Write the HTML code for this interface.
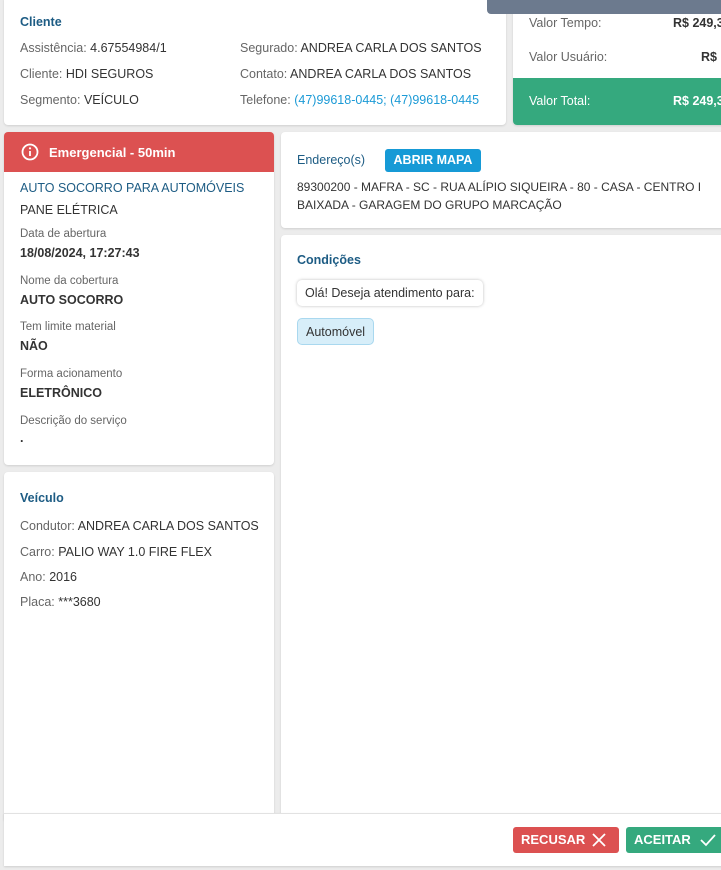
<!DOCTYPE html>
<html><head><meta charset="utf-8"><style>
*{box-sizing:border-box;margin:0;padding:0}
body{width:721px;height:870px;background:#ececec;font-family:"Liberation Sans",sans-serif;color:#333;position:relative;overflow:hidden;font-size:12.5px}
.c{position:absolute;background:#fff;border-radius:4px;box-shadow:0 1px 2px rgba(0,0,0,.12)}
.t{position:absolute;white-space:nowrap}
.h{color:#1d5c84;font-weight:bold;font-size:12.5px}
.g{color:#666}
.l{color:#666;font-size:11.5px}
.b{font-weight:bold;color:#333}
</style></head><body>
<div class="c" style="left:4px;top:-4px;width:502px;height:129px">
<div class="t h" style="left:16px;top:19px">Cliente</div>
<div class="t" style="left:16px;top:45px"><span class="g">Assistência:</span> 4.67554984/1</div>
<div class="t" style="left:16px;top:71px"><span class="g">Cliente:</span> HDI SEGUROS</div>
<div class="t" style="left:16px;top:97px"><span class="g">Segmento:</span> VEÍCULO</div>
<div class="t" style="left:236px;top:45px"><span class="g">Segurado:</span> ANDREA CARLA DOS SANTOS</div>
<div class="t" style="left:236px;top:71px"><span class="g">Contato:</span> ANDREA CARLA DOS SANTOS</div>
<div class="t" style="left:236px;top:97px"><span class="g">Telefone:</span> <span style="color:#1b9ad6">(47)99618-0445; (47)99618-0445</span></div>
</div>
<div class="c" style="left:513px;top:-4px;width:212px;height:129px;overflow:hidden">
<div class="t g" style="left:16px;top:20px">Valor Tempo:</div>
<div class="t b" style="left:160px;top:20px">R$ 249,3</div>
<div class="t g" style="left:16px;top:54px">Valor Usuário:</div>
<div class="t b" style="left:188px;top:54px">R$ 0</div>
<div style="position:absolute;left:0;top:82px;width:212px;height:47px;background:#35a97e"></div>
<div class="t" style="left:16px;top:98px;color:#fff">Valor Total:</div>
<div class="t" style="left:160px;top:98px;color:#fff;font-weight:bold">R$ 249,3</div>
</div>
<div style="position:absolute;left:487px;top:-4px;width:240px;height:18px;background:#6c7a8e;border-radius:4px"></div>
<div class="c" style="left:4px;top:132px;width:270px;height:333px;overflow:hidden">
<div style="position:absolute;left:0;top:0;width:270px;height:40px;background:#dc5151"></div>
<svg style="position:absolute;left:17px;top:11px" width="18" height="18" viewBox="0 0 18 18"><circle cx="9" cy="9" r="7.5" fill="none" stroke="#fff" stroke-width="1.8"/><line x1="9" y1="8" x2="9" y2="13" stroke="#fff" stroke-width="1.8"/><circle cx="9" cy="5.3" r="1.1" fill="#fff"/></svg>
<div class="t" style="left:45px;top:13px;color:#fff;font-weight:bold;font-size:13px">Emergencial - 50min</div>
<div class="t h" style="left:16px;top:49px;font-weight:normal;font-size:12.5px;color:#1d5c84">AUTO SOCORRO PARA AUTOMÓVEIS</div>
<div class="t" style="left:16px;top:71px">PANE ELÉTRICA</div>
<div class="t l" style="left:16px;top:96px">Data de abertura</div>
<div class="t b" style="left:16px;top:114px">18/08/2024, 17:27:43</div>
<div class="t l" style="left:16px;top:143px">Nome da cobertura</div>
<div class="t b" style="left:16px;top:161px">AUTO SOCORRO</div>
<div class="t l" style="left:16px;top:189px">Tem limite material</div>
<div class="t b" style="left:16px;top:207px">NÃO</div>
<div class="t l" style="left:16px;top:236px">Forma acionamento</div>
<div class="t b" style="left:16px;top:254px">ELETRÔNICO</div>
<div class="t l" style="left:16px;top:283px">Descrição do serviço</div>
<div class="t b" style="left:16px;top:299px">.</div>
</div>
<div class="c" style="left:4px;top:472px;width:270px;height:350px">
<div class="t h" style="left:16px;top:19px">Veículo</div>
<div class="t" style="left:16px;top:47px"><span class="g">Condutor:</span> ANDREA CARLA DOS SANTOS</div>
<div class="t" style="left:16px;top:73px"><span class="g">Carro:</span> PALIO WAY 1.0 FIRE FLEX</div>
<div class="t" style="left:16px;top:98px"><span class="g">Ano:</span> 2016</div>
<div class="t" style="left:16px;top:123px"><span class="g">Placa:</span> ***3680</div>
</div>
<div class="c" style="left:281px;top:132px;width:444px;height:96px">
<div class="t h" style="left:16px;top:21px;font-weight:normal">Endereço(s)</div>
<div style="position:absolute;left:104px;top:17px;width:96px;height:23px;background:#169ad6;border-radius:3px;color:#fff;font-weight:bold;font-size:12.5px;text-align:center;line-height:23px">ABRIR MAPA</div>
<div class="t" style="left:16px;top:46px;font-size:12px;line-height:18px;white-space:normal;width:425px">89300200 - MAFRA - SC - RUA ALÍPIO SIQUEIRA - 80 - CASA - CENTRO I BAIXADA - GARAGEM DO GRUPO MARCAÇÃO</div>
</div>
<div class="c" style="left:281px;top:235px;width:444px;height:590px">
<div class="t h" style="left:16px;top:18px">Condições</div>
<div style="position:absolute;left:16px;top:45px;height:26px;padding:0 8px;line-height:26px;background:#fff;border-radius:5px;box-shadow:0 0 3px rgba(0,0,0,.25);white-space:nowrap">Olá! Deseja atendimento para:</div>
<div style="position:absolute;left:16px;top:83px;height:27px;padding:0 8px;line-height:26px;background:#d7eef9;border:1px solid #a9d8ef;border-radius:5px;white-space:nowrap">Automóvel</div>
</div>
<div style="position:absolute;left:4px;top:813px;width:721px;height:53px;background:#fff;border-top:1px solid #e2e2e2;box-shadow:0 1px 2px rgba(0,0,0,.12)"></div>
<div style="position:absolute;left:513px;top:827px;width:106px;height:26px;background:#dc5151;border-radius:3px;color:#fff;font-weight:bold;font-size:13px;line-height:26px;padding-left:8px">RECUSAR
<svg style="position:absolute;left:79px;top:6px" width="14" height="14"><path d="M1 1L13 13M13 1L1 13" stroke="#fff" stroke-width="1.8"/></svg></div>
<div style="position:absolute;left:626px;top:827px;width:100px;height:26px;background:#35a97e;border-radius:3px;color:#fff;font-weight:bold;font-size:13px;line-height:26px;padding-left:8px">ACEITAR
<svg style="position:absolute;left:74px;top:6px" width="16" height="14"><path d="M1 7L6 12L15 2" fill="none" stroke="#fff" stroke-width="1.8"/></svg></div>
</body></html>
